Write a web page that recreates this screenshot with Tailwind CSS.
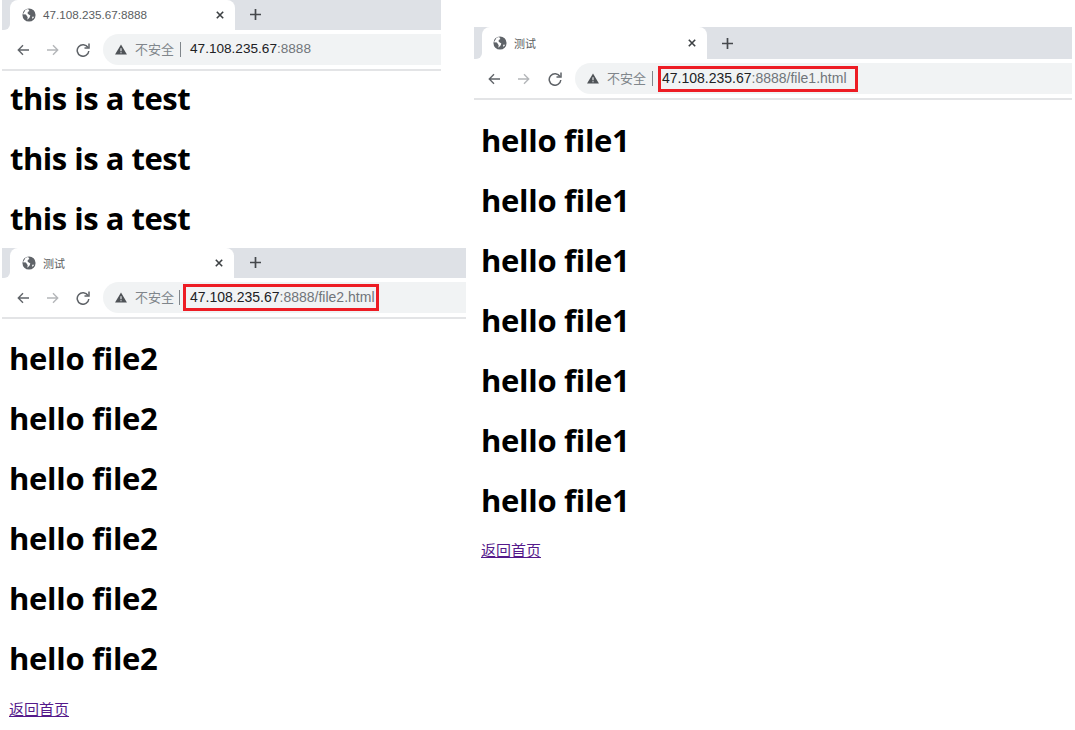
<!DOCTYPE html>
<html lang="en">
<head>
    <meta charset="UTF-8">
    <title>file server screenshots</title>
    <script src="https://cdn.jsdelivr.net/npm/@tailwindcss/browser@4"></script>
</head>
<body class="bg-white font-['Open_Sans','Noto_Sans_CJK_SC',sans-serif]">
<div class="relative w-[1075px] h-[730px] overflow-hidden bg-white">

    <!-- top left window -->
    <div class="absolute left-[2px] top-0 w-[439px] h-[240px] overflow-hidden">
        <div class="flex h-[30px] bg-[#dee1e6]">
            <div class="w-[8px] bg-white"><div class="w-full h-full bg-[#dee1e6] rounded-br-[6px]"></div></div>
            <div class="flex items-center w-[225px] h-full bg-white rounded-t-[8px] pl-[12px] pr-[11px]">
                <svg class="w-[14px] h-[14px] shrink-0" viewBox="0 0 16 16"><circle cx="8" cy="8" r="7.5" fill="#5f6368"/><path d="M1 7l3.500 0.500 2 3-0.500 3 2.500-2.500 1-2.500-3-2 0-2 2-1-1.500-2.500-3 1-1 2z M11.500 10l2.500 0-2 2.500z" fill="#fff"/></svg>
                <span class="ml-[7px] text-[11.700px] leading-none text-[#5a5d61] font-['Liberation_Sans',sans-serif]">47.108.235.67:8888</span>
                <svg class="ml-auto w-[8px] h-[8px]" viewBox="0 0 10 10"><path d="M1 1l8 8M9 1l-8 8" stroke="#3c4043" stroke-width="2"/></svg>
            </div>
            <svg class="ml-[15px] mt-[9px] w-[11px] h-[11px]" viewBox="0 0 13 13"><path d="M6.500 0v13M0 6.500h13" stroke="#45484c" stroke-width="2"/></svg>
        </div>
        <div class="flex items-center h-[41px] border-b-2 border-[#e3e4e6]">
            <svg class="ml-[15px] w-[12px] h-[12px]" viewBox="0 0 14 14" fill="none" stroke="#5f6368" stroke-width="1.600"><path d="M14 7H1.500M7 1.500L1.500 7 7 12.500"/></svg>
            <svg class="ml-[18px] w-[12px] h-[12px]" viewBox="0 0 14 14" fill="none" stroke="#b4b6b9" stroke-width="1.600"><path d="M0 7h12.500M7 1.500L12.500 7 7 12.500"/></svg>
            <svg class="ml-[17px] w-[14px] h-[14px]" viewBox="0 0 14 14" fill="none" stroke="#5f6368" stroke-width="1.500"><path d="M12 4.500A5.800 5.800 0 1 0 12.800 8"/><path d="M13 0.500v4.500H8.500" /></svg>
            <div class="flex items-center ml-[13px] flex-1 h-[31px] pl-[12px] bg-[#f1f3f4] rounded-l-full">
                <svg class="w-[12px] h-[11px]" viewBox="0 0 13 12"><path d="M6.500 0.500L13 11.500H0z" fill="#4f5357"/><path d="M6.500 4.500v3.500M6.500 9v1.200" stroke="#f1f3f4" stroke-width="1.200"/></svg>
                <span class="ml-[8px] text-[13px] text-[#80868b]">不安全</span>
                <span class="ml-[6px] w-px h-[15px] bg-[#80868b]"></span>
                <span class="ml-[9px] text-[13.600px] text-[#202124] font-['Liberation_Sans',sans-serif]">47.108.235.67<span class="text-[#70757a]">:8888</span></span>
            </div>
        </div>
        <div class="flex flex-col gap-[22px] pl-[8px] pt-[8px] text-[31px] tracking-[-0.5px] leading-[38px] font-bold text-black">
            <h1>this is a test</h1>
            <h1>this is a test</h1>
            <h1>this is a test</h1>
        </div>
    </div>

    <!-- bottom left window -->
    <div class="absolute left-[2px] top-[248px] w-[464px] h-[482px] overflow-hidden">
        <div class="flex h-[30px] bg-[#dee1e6]">
            <div class="w-[8px] bg-white"><div class="w-full h-full bg-[#dee1e6] rounded-br-[6px]"></div></div>
            <div class="flex items-center w-[224px] h-full bg-white rounded-t-[8px] pl-[12px] pr-[11px]">
                <svg class="w-[14px] h-[14px] shrink-0" viewBox="0 0 16 16"><circle cx="8" cy="8" r="7.5" fill="#5f6368"/><path d="M1 7l3.500 0.500 2 3-0.500 3 2.500-2.500 1-2.500-3-2 0-2 2-1-1.500-2.500-3 1-1 2z M11.500 10l2.500 0-2 2.500z" fill="#fff"/></svg>
                <span class="ml-[7px] text-[11px] leading-none text-[#5a5d61]">测试</span>
                <svg class="ml-auto w-[8px] h-[8px]" viewBox="0 0 10 10"><path d="M1 1l8 8M9 1l-8 8" stroke="#3c4043" stroke-width="2"/></svg>
            </div>
            <svg class="ml-[16px] mt-[9px] w-[11px] h-[11px]" viewBox="0 0 13 13"><path d="M6.500 0v13M0 6.500h13" stroke="#45484c" stroke-width="2"/></svg>
        </div>
        <div class="flex items-center h-[41px] border-b-2 border-[#e3e4e6]">
            <svg class="ml-[15px] w-[12px] h-[12px]" viewBox="0 0 14 14" fill="none" stroke="#5f6368" stroke-width="1.600"><path d="M14 7H1.500M7 1.500L1.500 7 7 12.500"/></svg>
            <svg class="ml-[18px] w-[12px] h-[12px]" viewBox="0 0 14 14" fill="none" stroke="#b4b6b9" stroke-width="1.600"><path d="M0 7h12.500M7 1.500L12.500 7 7 12.500"/></svg>
            <svg class="ml-[17px] w-[14px] h-[14px]" viewBox="0 0 14 14" fill="none" stroke="#5f6368" stroke-width="1.500"><path d="M12 4.500A5.800 5.800 0 1 0 12.800 8"/><path d="M13 0.500v4.500H8.500" /></svg>
            <div class="flex items-center ml-[13px] flex-1 h-[31px] pl-[12px] bg-[#f1f3f4] rounded-l-full">
                <svg class="w-[12px] h-[11px]" viewBox="0 0 13 12"><path d="M6.500 0.500L13 11.500H0z" fill="#4f5357"/><path d="M6.500 4.500v3.500M6.500 9v1.200" stroke="#f1f3f4" stroke-width="1.200"/></svg>
                <span class="ml-[8px] text-[13px] text-[#80868b]">不安全</span>
                <span class="ml-[5px] w-px h-[15px] bg-[#80868b]"></span>
                <span class="ml-[3px] flex items-center h-[27px] pl-[4px] pr-[1px] border-[3px] border-[#ed1c24] text-[14px] text-[#202124] font-['Liberation_Sans',sans-serif]">47.108.235.67<span class="text-[#70757a]">:8888/file2.html</span></span>
            </div>
        </div>
        <div class="flex flex-col gap-[22px] pl-[7px] pt-[20px] text-[31px] tracking-[-0.3px] leading-[38px] font-bold text-black">
            <h1>hello file2</h1>
            <h1>hello file2</h1>
            <h1>hello file2</h1>
            <h1>hello file2</h1>
            <h1>hello file2</h1>
            <h1>hello file2</h1>
        </div>
        <a href="#" class="block ml-[7px] mt-[22px] text-[15px] leading-[20px] underline text-[#551a8b]">返回首页</a>
    </div>

    <!-- right window -->
    <div class="absolute left-[474px] top-[27px] w-[598px] h-[560px] overflow-hidden">
        <div class="flex h-[32px] bg-[#dee1e6]">
            <div class="w-[8px] bg-white"><div class="w-full h-full bg-[#dee1e6] rounded-br-[6px]"></div></div>
            <div class="flex items-center w-[225px] h-full bg-white rounded-t-[8px] pl-[11px] pr-[11px]">
                <svg class="w-[14px] h-[14px] shrink-0" viewBox="0 0 16 16"><circle cx="8" cy="8" r="7.5" fill="#5f6368"/><path d="M1 7l3.500 0.500 2 3-0.500 3 2.500-2.500 1-2.500-3-2 0-2 2-1-1.500-2.500-3 1-1 2z M11.500 10l2.500 0-2 2.500z" fill="#fff"/></svg>
                <span class="ml-[7px] text-[11px] leading-none text-[#5a5d61]">测试</span>
                <svg class="ml-auto w-[8px] h-[8px]" viewBox="0 0 10 10"><path d="M1 1l8 8M9 1l-8 8" stroke="#3c4043" stroke-width="2"/></svg>
            </div>
            <svg class="ml-[15px] mt-[11px] w-[11px] h-[11px]" viewBox="0 0 13 13"><path d="M6.500 0v13M0 6.500h13" stroke="#45484c" stroke-width="2"/></svg>
        </div>
        <div class="flex items-center h-[41px] border-b-2 border-[#e3e4e6]">
            <svg class="ml-[14px] w-[12px] h-[12px]" viewBox="0 0 14 14" fill="none" stroke="#5f6368" stroke-width="1.600"><path d="M14 7H1.500M7 1.500L1.500 7 7 12.500"/></svg>
            <svg class="ml-[18px] w-[12px] h-[12px]" viewBox="0 0 14 14" fill="none" stroke="#b4b6b9" stroke-width="1.600"><path d="M0 7h12.500M7 1.500L12.500 7 7 12.500"/></svg>
            <svg class="ml-[18px] w-[14px] h-[14px]" viewBox="0 0 14 14" fill="none" stroke="#5f6368" stroke-width="1.500"><path d="M12 4.500A5.800 5.800 0 1 0 12.800 8"/><path d="M13 0.500v4.500H8.500" /></svg>
            <div class="flex items-center ml-[13px] flex-1 h-[31px] pl-[12px] bg-[#f1f3f4] rounded-l-full">
                <svg class="w-[12px] h-[11px]" viewBox="0 0 13 12"><path d="M6.500 0.500L13 11.500H0z" fill="#4f5357"/><path d="M6.500 4.500v3.500M6.500 9v1.200" stroke="#f1f3f4" stroke-width="1.200"/></svg>
                <span class="ml-[8px] text-[13px] text-[#80868b]">不安全</span>
                <span class="ml-[6px] w-px h-[15px] bg-[#80868b]"></span>
                <span class="ml-[5px] flex items-center w-[200px] h-[26px] pl-px border-[3px] border-[#ed1c24] text-[14px] text-[#202124] font-['Liberation_Sans',sans-serif]">47.108.235.67<span class="text-[#70757a]">:8888/file1.html</span></span>
            </div>
        </div>
        <div class="flex flex-col gap-[22px] pl-[7px] pt-[21px] text-[31px] tracking-[-0.3px] leading-[38px] font-bold text-black">
            <h1>hello file1</h1>
            <h1>hello file1</h1>
            <h1>hello file1</h1>
            <h1>hello file1</h1>
            <h1>hello file1</h1>
            <h1>hello file1</h1>
            <h1>hello file1</h1>
        </div>
        <a href="#" class="block ml-[7px] mt-[21px] text-[15px] leading-[20px] underline text-[#551a8b]">返回首页</a>
    </div>

</div>
</body>
</html>
